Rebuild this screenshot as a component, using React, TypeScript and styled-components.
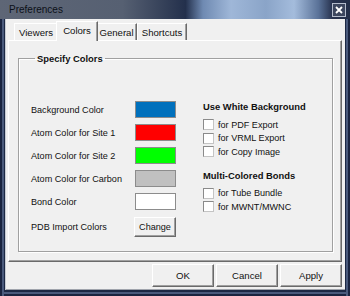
import { Fragment } from "react";
import styled, { createGlobalStyle } from "styled-components";

const GlobalStyle = createGlobalStyle`
  html, body {
    margin: 0;
    padding: 0;
    background: #1c2844;
  }
  body {
    font-family: "Liberation Sans", Arial, sans-serif;
  }
`;

const Window = styled.div`
  width: 350px;
  height: 296px;
  box-sizing: border-box;
  display: flex;
  flex-direction: column;
  background: #1c2844;
  padding: 0 5px 6px 5px;
  box-shadow: inset 2px 0 #1a2440, inset 4px 0 #4a5a7c, inset -2px 0 #1a2440,
    inset -4px 0 #4a5a7c, inset 0 -2px #1a2440, inset 0 -4px #4a5a7c;
`;

const TitleBar = styled.div`
  height: 19px;
  margin: 0 -5px;
  padding: 0 4px 0 9px;
  display: flex;
  align-items: center;
  justify-content: space-between;
  background: linear-gradient(
    90deg,
    #5e6676 0%,
    #566072 35%,
    #2c3852 50%,
    #23304c 53%,
    #6f8ab2 58%,
    #9fb7d8 66%,
    #8aa4c8 76%,
    #a4bcdc 84%,
    #5a7298 91%,
    #27324e 95%,
    #232e48 100%
  );
  font-size: 10px;
`;

const TitleText = styled.span`
  color: #0c1018;
`;

const CloseButton = styled.div`
  width: 12px;
  height: 12px;
  border: 1px solid #b4bccc;
  background: #3c465e;
  display: flex;
  align-items: center;
  justify-content: center;
`;

const Client = styled.div`
  flex: 1;
  background: #f0f0f0;
  display: flex;
  flex-direction: column;
  padding: 3px 3px 2px 3px;
  box-shadow: inset 1px 0 #c8ccd4, inset 0 -1px #a0a4ac;
`;

const TabStrip = styled.div`
  display: flex;
  align-items: flex-end;
  height: 19px;
  padding-left: 6px;
  position: relative;
  z-index: 1;
  margin-bottom: -1px;
`;

const Tab = styled.div<{ $active?: boolean; $w: number }>`
  box-sizing: border-box;
  width: ${(p) => p.$w}px;
  height: ${(p) => (p.$active ? 20 : 17)}px;
  margin: ${(p) => (p.$active ? "0 -2px 0 -2px" : "0 0 1px 0")};
  position: relative;
  z-index: ${(p) => (p.$active ? 2 : 1)};
  background: #f0f0f0;
  border-top: 1px solid #ffffff;
  border-left: 1px solid #ffffff;
  border-right: 1px solid #6a6a6a;
  box-shadow: inset -1px 0 #a0a0a0;
  display: flex;
  align-items: ${(p) => (p.$active ? "flex-start" : "center")};
  padding-top: ${(p) => (p.$active ? 3 : 0)}px;
  justify-content: center;
  font-size: 9.6px;
  color: #111;
`;

const Panel = styled.div`
  height: 222px;
  box-sizing: border-box;
  background: #f0f0f0;
  border-top: 1px solid #ffffff;
  border-left: 1px solid #ffffff;
  border-right: 1px solid #6a6a6a;
  border-bottom: 1px solid #6a6a6a;
  box-shadow: inset -1px -1px #a0a0a0;
  padding: 12px 8px 9px 9px;
  display: flex;
`;

const GroupBox = styled.fieldset`
  flex: 1;
  margin: 0;
  padding: 26px 0 0 12px;
  border: 1px solid #a0a0a0;
  box-shadow: inset 1px 1px #ffffff, 1px 1px #ffffff;
  display: flex;
  gap: 27px;
  min-width: 0;
`;

const Legend = styled.legend`
  margin-left: 4px;
  padding: 0 2px;
  font-size: 9.4px;
  font-weight: bold;
  color: #111;
`;

const ColorGrid = styled.div`
  display: grid;
  grid-template-columns: 104px 41px;
  grid-auto-rows: 17px;
  row-gap: 6px;
  align-items: center;
  margin-top: 11px;
`;

const Label = styled.div<{ $shift?: number }>`
  font-size: 9.1px;
  color: #111;
  white-space: nowrap;
  margin-top: ${(p) => p.$shift ?? 0}px;
`;

const Swatch = styled.div<{ $color: string }>`
  width: 41px;
  height: 17px;
  box-sizing: border-box;
  background: ${(p) => p.$color};
  border: 1px solid #8c8c8c;
`;

const SmallButton = styled.div`
  width: 42px;
  height: 20px;
  margin: 4px 0 0 -1px;
  box-sizing: border-box;
  background: #f0f0f0;
  border-style: solid;
  border-width: 1px;
  border-color: #ffffff #6a6a6a #6a6a6a #ffffff;
  box-shadow: inset -1px -1px #a0a0a0;
  display: flex;
  align-items: center;
  justify-content: center;
  font-size: 9.1px;
  color: #111;
`;

const Options = styled.div`
  display: flex;
  flex-direction: column;
  padding-top: 11px;
`;

const OptionHeader = styled.div<{ $gap?: number }>`
  height: 12px;
  line-height: 12px;
  margin-top: ${(p) => p.$gap ?? 0}px;
  margin-bottom: 5px;
  font-size: 9.4px;
  font-weight: bold;
  color: #111;
`;

const CheckRow = styled.div`
  height: 13.5px;
  display: flex;
  align-items: center;
  gap: 4px;
  font-size: 9.1px;
  color: #111;
`;

const Box = styled.div`
  width: 11px;
  height: 11px;
  box-sizing: border-box;
  background: #ffffff;
  border-style: solid;
  border-width: 1px;
  border-color: #8a8a8a #c4c4c4 #c4c4c4 #8a8a8a;
`;

const ButtonRow = styled.div`
  display: flex;
  justify-content: flex-end;
  gap: 2px;
  margin-top: 2px;
`;

const DialogButton = styled.div`
  width: 62px;
  height: 23px;
  box-sizing: border-box;
  background: #f0f0f0;
  border-style: solid;
  border-width: 1px;
  border-color: #ffffff #6a6a6a #6a6a6a #ffffff;
  box-shadow: inset -1px -1px #a0a0a0;
  display: flex;
  align-items: center;
  justify-content: center;
  font-size: 9.6px;
  color: #111;
`;

const colors = [
  { label: "Background Color", color: "#0070bc" },
  { label: "Atom Color for Site 1", color: "#ff0000" },
  { label: "Atom Color for Site 2", color: "#00ff00" },
  { label: "Atom Color for Carbon", color: "#c0c0c0" },
  { label: "Bond Color", color: "#ffffff" },
];

const tabs = [
  { name: "Viewers", w: 44 },
  { name: "Colors", w: 42, active: true },
  { name: "General", w: 41 },
  { name: "Shortcuts", w: 50 },
];

const whiteBg = ["for PDF Export", "for VRML Export", "for Copy Image"];
const multiBonds = ["for Tube Bundle", "for MWNT/MWNC"];

export default function App() {
  return (
    <>
      <GlobalStyle />
      <Window>
        <TitleBar>
          <TitleText>Preferences</TitleText>
          <CloseButton>
            <svg width="8" height="8" viewBox="0 0 8 8">
              <path d="M1 1 L7 7 M7 1 L1 7" stroke="#ffffff" strokeWidth="1.8" />
            </svg>
          </CloseButton>
        </TitleBar>
        <Client>
          <TabStrip>
            {tabs.map((t) => (
              <Tab key={t.name} $w={t.w} $active={t.active}>
                {t.name}
              </Tab>
            ))}
          </TabStrip>
          <Panel>
            <GroupBox>
              <Legend>Specify Colors</Legend>
              <ColorGrid>
                {colors.map((c) => (
                  <Fragment key={c.label}>
                    <Label>{c.label}</Label>
                    <Swatch $color={c.color} />
                  </Fragment>
                ))}
                <Label $shift={4}>PDB Import Colors</Label>
                <SmallButton>Change</SmallButton>
              </ColorGrid>
              <Options>
                <OptionHeader>Use White Background</OptionHeader>
                {whiteBg.map((o) => (
                  <CheckRow key={o}>
                    <Box />
                    {o}
                  </CheckRow>
                ))}
                <OptionHeader $gap={11}>Multi-Colored Bonds</OptionHeader>
                {multiBonds.map((o) => (
                  <CheckRow key={o}>
                    <Box />
                    {o}
                  </CheckRow>
                ))}
              </Options>
            </GroupBox>
          </Panel>
          <ButtonRow>
            <DialogButton>OK</DialogButton>
            <DialogButton>Cancel</DialogButton>
            <DialogButton>Apply</DialogButton>
          </ButtonRow>
        </Client>
      </Window>
    </>
  );
}
